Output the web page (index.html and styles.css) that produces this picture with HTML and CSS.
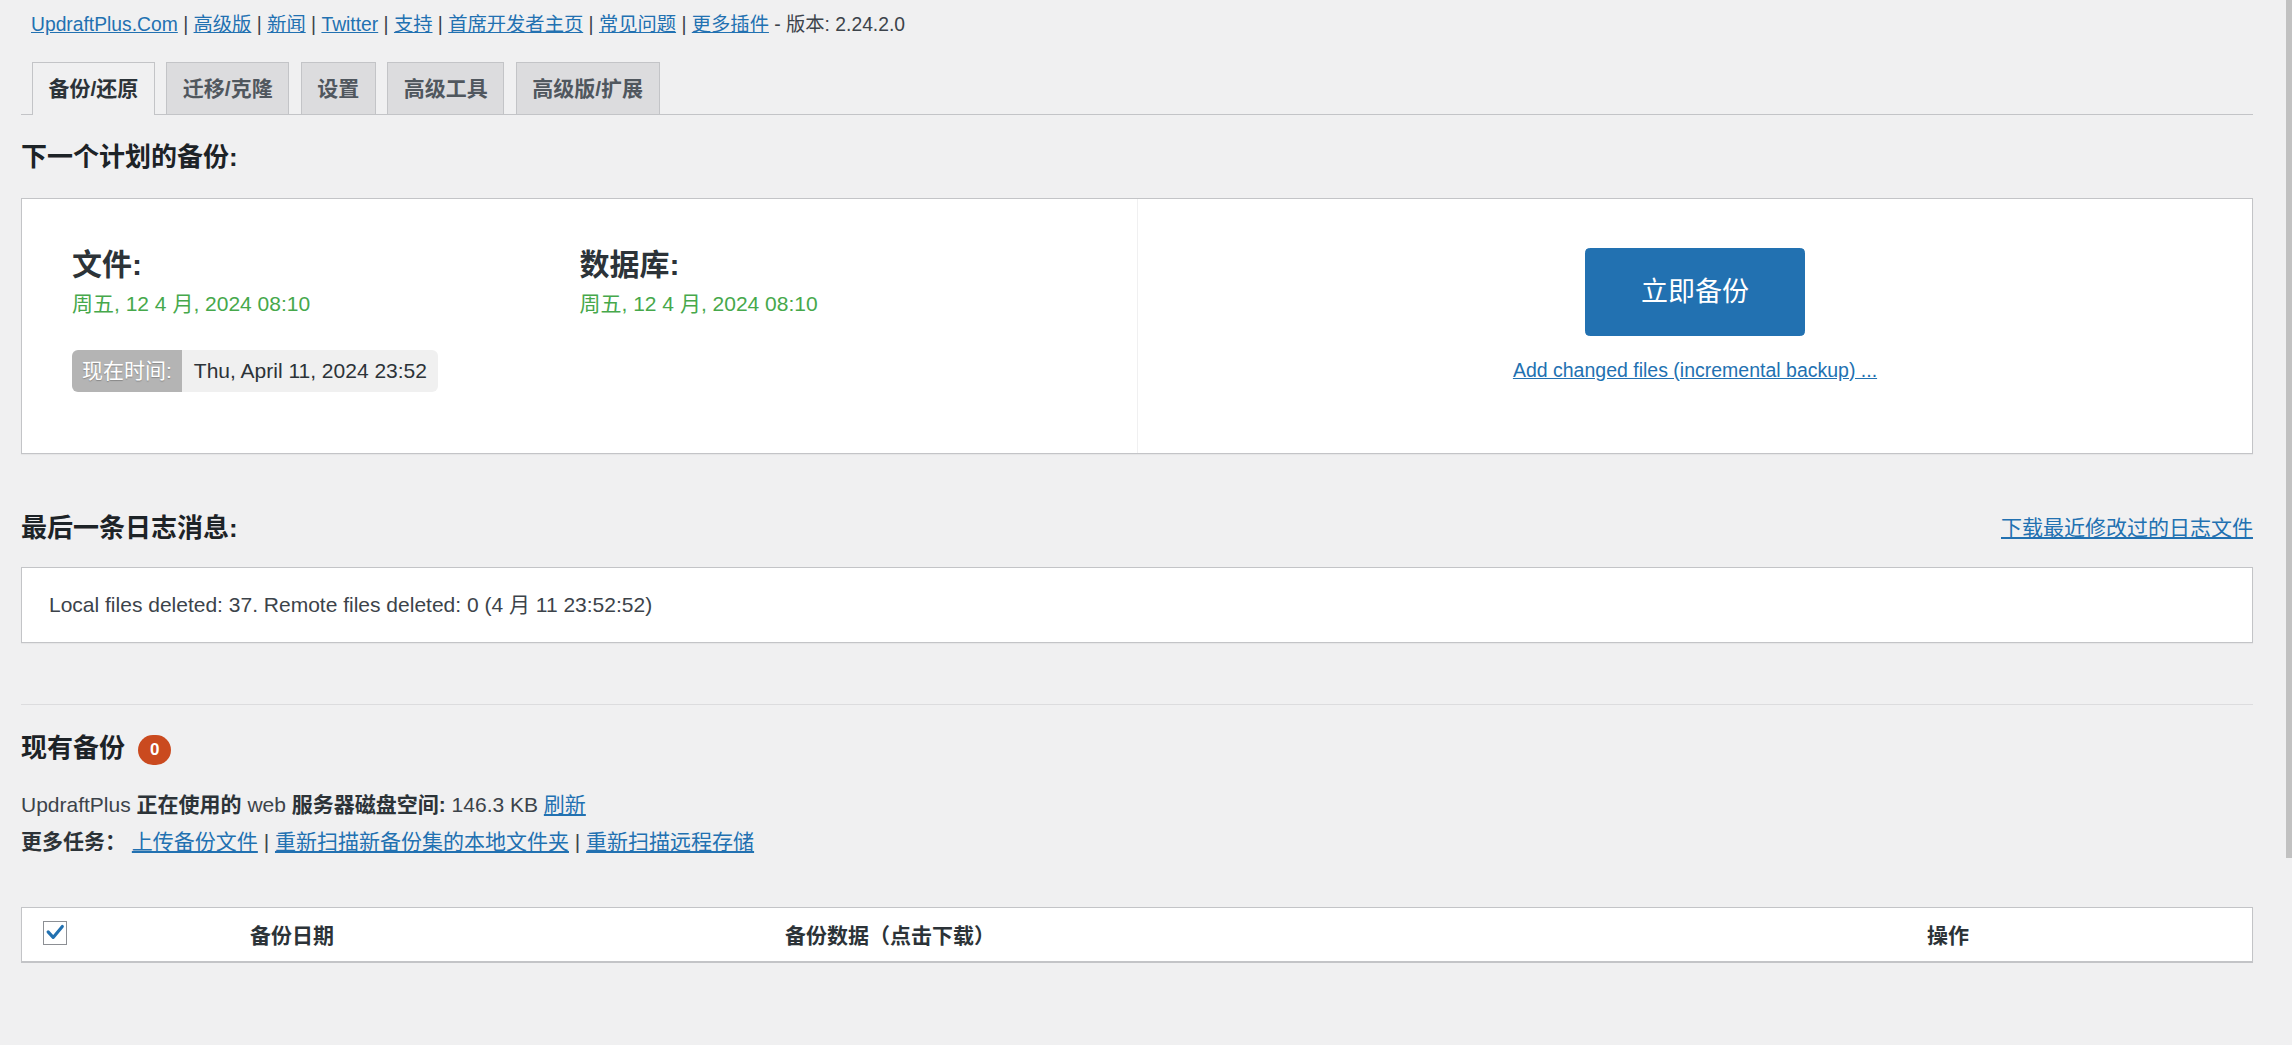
FILE: index.html
```html
<!DOCTYPE html>
<html lang="zh-CN">
<head>
    <meta charset="UTF-8">
    <title>UpdraftPlus 备份/还原</title>
    <link rel="stylesheet" href="styles.css">
</head>
<body>
    <div class="wrap">
        <p class="plugin-links"><a href="#">UpdraftPlus.Com</a> | <a href="#">高级版</a> | <a href="#">新闻</a> | <a href="#">Twitter</a> | <a href="#">支持</a> | <a href="#">首席开发者主页</a> | <a href="#">常见问题</a> | <a href="#">更多插件</a> - 版本: 2.24.2.0</p>

        <nav class="nav-tabs">
            <a href="#" class="nav-tab nav-tab-active">备份/还原</a>
            <a href="#" class="nav-tab">迁移/克隆</a>
            <a href="#" class="nav-tab">设置</a>
            <a href="#" class="nav-tab">高级工具</a>
            <a href="#" class="nav-tab">高级版/扩展</a>
        </nav>

        <h2 class="section-title">下一个计划的备份:</h2>
        <div class="next-backup">
            <div class="next-backup-times">
                <div class="entities">
                    <div class="entity">
                        <div class="entity-title">文件:</div>
                        <div class="entity-date">周五, 12 4 月, 2024 08:10</div>
                    </div>
                    <div class="entity">
                        <div class="entity-title">数据库:</div>
                        <div class="entity-date">周五, 12 4 月, 2024 08:10</div>
                    </div>
                </div>
                <div class="now-time">
                    <span class="now-label">现在时间:</span>
                    <span class="now-value">Thu, April 11, 2024 23:52</span>
                </div>
            </div>
            <div class="backup-now">
                <button class="button-primary" type="button">立即备份</button>
                <a href="#" class="incremental-link">Add changed files (incremental backup) ...</a>
            </div>
        </div>

        <div class="log-head">
            <h2 class="section-title">最后一条日志消息:</h2>
            <a href="#" class="log-download">下载最近修改过的日志文件</a>
        </div>
        <div class="log-message">Local files deleted: 37. Remote files deleted: 0 (4 月 11 23:52:52)</div>

        <hr class="divider">

        <div class="existing-head">
            <h2 class="section-title">现有备份</h2>
            <span class="count-badge">0</span>
        </div>
        <div class="existing-info">
            <div>UpdraftPlus <strong>正在使用的</strong> web <strong>服务器磁盘空间:</strong> 146.3 KB <a href="#">刷新</a></div>
            <div><strong>更多任务：</strong> <a href="#">上传备份文件</a> | <a href="#">重新扫描新备份集的本地文件夹</a> | <a href="#">重新扫描远程存储</a></div>
        </div>

        <table class="existing-backups">
            <thead>
                <tr>
                    <th class="check-column">
                        <span class="checkbox">
                            <svg viewBox="0 0 24 24" width="22" height="22"><path d="M4.5 10.8 L10 16.8 L20 4.8" fill="none" stroke="#2271b1" stroke-width="3.4" stroke-linecap="round" stroke-linejoin="round"/></svg>
                        </span>
                    </th>
                    <th class="backup-date">备份日期</th>
                    <th class="backup-data">备份数据（点击下载）</th>
                    <th class="backup-actions">操作</th>
                </tr>
            </thead>
        </table>
    </div>
    <div class="scroll-thumb"></div>
</body>
</html>
```

FILE: styles.css
```css
html {
    overflow: hidden;
}
body {
    margin: 0;
    background: #f0f0f1;
    color: #3c434a;
    font-family: "Liberation Sans", "Noto Sans CJK SC", sans-serif;
    font-size: 21px;
}
a {
    color: #2271b1;
}
.wrap {
    margin: 0 39px 0 21px;
}
.plugin-links {
    margin: 0;
    padding: 10px 0 0 10px;
    font-size: 19.3px;
    line-height: 30px;
}

/* tabs */
.nav-tabs {
    display: flex;
    gap: 11.5px;
    margin-top: 22px;
    padding-left: 11px;
    border-bottom: 1px solid #c3c4c7;
}
.nav-tab {
    padding: 7.5px 15.5px;
    line-height: 36px;
    font-size: 21px;
    font-weight: 700;
    color: #50575e;
    background: #dcdcde;
    border: 1px solid #c3c4c7;
    border-bottom: none;
    text-decoration: none;
}
.nav-tab-active {
    background: #f0f0f1;
    color: #2c3338;
    margin-bottom: -1px;
    padding-bottom: 8.5px;
}

.section-title {
    margin: 24px 0 22.5px;
    font-size: 26px;
    line-height: 36px;
    font-weight: 700;
    color: #1d2327;
}

/* next scheduled backup */
.next-backup {
    display: flex;
    background: #fff;
    border: 1px solid #c3c4c7;
    box-shadow: 0 1px 1px rgba(0, 0, 0, 0.04);
}
.next-backup-times {
    width: 50%;
    box-sizing: border-box;
    padding: 46px 50px 61px;
}
.entities {
    display: grid;
    grid-template-columns: 1fr 1fr;
}
.entity-title {
    font-size: 30px;
    line-height: 40px;
    font-weight: 700;
    color: #2c3338;
}
.entity-date {
    margin-top: 4px;
    font-size: 21px;
    line-height: 30px;
    color: #46a84b;
}
.now-time {
    display: inline-flex;
    margin-top: 31px;
    height: 42px;
    line-height: 42px;
    border-radius: 6px;
    overflow: hidden;
}
.now-label {
    padding: 0 10px;
    background: #b4b4b4;
    color: #fff;
    text-shadow: 0 1px 1px rgba(0, 0, 0, 0.25);
}
.now-value {
    padding: 0 11px 0 12px;
    background: #f0f0f0;
    color: #2c3338;
}
.backup-now {
    width: 50%;
    box-sizing: border-box;
    padding-top: 49px;
    border-left: 1px solid #f0f0f1;
    display: flex;
    flex-direction: column;
    align-items: center;
}
.button-primary {
    height: 88px;
    padding: 0 55px;
    background: #2271b1;
    border: 1px solid #2271b1;
    border-radius: 4.5px;
    color: #fff;
    font-family: "Liberation Sans", "Noto Sans CJK SC", sans-serif;
    font-size: 27px;
    line-height: 86px;
    cursor: pointer;
}
.incremental-link {
    margin-top: 19px;
    font-size: 19.5px;
    line-height: 30px;
}

/* last log message */
.log-head {
    display: flex;
    justify-content: space-between;
    align-items: center;
    margin-top: 56px;
}
.log-head .section-title {
    margin: 0;
}
.log-download {
    font-size: 21px;
    line-height: 36px;
}
.log-message {
    margin-top: 21px;
    padding: 22px 27px;
    line-height: 30px;
    background: #fff;
    border: 1px solid #c3c4c7;
    box-shadow: 0 1px 1px rgba(0, 0, 0, 0.04);
}
.divider {
    margin: 61px 0 0;
    border: none;
    border-top: 1px solid #dcdcde;
}

/* existing backups */
.existing-head {
    display: flex;
    align-items: center;
    gap: 13px;
    margin-top: 25px;
}
.existing-head .section-title {
    margin: 0;
}
.count-badge {
    margin-top: 4px;
    height: 30px;
    padding: 0 12px;
    border-radius: 15px;
    background: #ca4a1f;
    color: #fff;
    font-size: 17px;
    font-weight: 700;
    line-height: 30px;
}
.existing-info {
    margin-top: 20.5px;
    line-height: 37px;
}
.existing-info strong {
    color: #2c3338;
}
.existing-backups {
    width: 100%;
    margin-top: 46.5px;
    table-layout: fixed;
    border-spacing: 0;
    background: #fff;
    border: 1px solid #c3c4c7;
    box-shadow: 0 1px 1px rgba(0, 0, 0, 0.04);
}
.existing-backups th {
    height: 53px;
    padding: 0;
    border-bottom: 1px solid #c3c4c7;
    font-size: 21px;
    font-weight: 700;
    color: #2c3338;
    text-align: center;
}
.existing-backups .check-column {
    width: 45px;
    padding-left: 21px;
    text-align: left;
}
.existing-backups .backup-date {
    width: 408px;
}
.existing-backups .backup-data {
    width: 788px;
}
.existing-backups .backup-actions {
    padding-left: 360px;
}
.checkbox {
    display: inline-flex;
    align-items: center;
    justify-content: center;
    width: 24px;
    height: 24px;
    box-sizing: border-box;
    border: 1px solid #8c8f94;
    background: #fff;
    vertical-align: middle;
    margin-top: -4px;
}

.scroll-thumb {
    position: fixed;
    top: 0;
    right: 0;
    width: 6px;
    height: 858px;
    background: #c1c1c1;
}
```
